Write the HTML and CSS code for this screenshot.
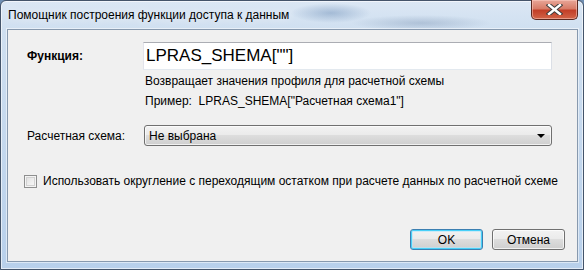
FILE: index.html
```html
<!DOCTYPE html>
<html lang="ru">
<head>
    <meta charset="UTF-8">
    <title>Помощник построения функции доступа к данным</title>
    <link rel="stylesheet" href="styles.css">
</head>
<body>
    <div class="window">
        <div class="titlebar">
            <span class="title">Помощник построения функции доступа к данным</span>
            <button class="close-btn" title="Закрыть">
                <svg width="17" height="11" viewBox="0 0 17 11">
                    <path d="M3 1 L14 10 M14 1 L3 10" stroke="#3d3d3d" stroke-width="4.4" stroke-linecap="square" fill="none"/>
                    <path d="M3 1 L14 10 M14 1 L3 10" stroke="#ffffff" stroke-width="2.4" stroke-linecap="square" fill="none"/>
                </svg>
            </button>
        </div>

        <div class="client">
            <div class="field-row func-row">
                <label class="field-label bold">Функция:</label>
                <input class="func-input" type="text" value='LPRAS_SHEMA[""]'>
            </div>
            <div class="hint">Возвращает значения профиля для расчетной схемы</div>
            <div class="hint example">Пример:&nbsp; LPRAS_SHEMA["Расчетная схема1"]</div>

            <div class="field-row scheme-row">
                <label class="field-label">Расчетная схема:</label>
                <div class="combo">
                    <span>Не выбрана</span>
                    <span class="combo-arrow"></span>
                </div>
            </div>

            <label class="check-row">
                <span class="checkbox"></span>
                Использовать округление с переходящим остатком при расчете данных по расчетной схеме
            </label>

            <div class="buttons">
                <button class="btn btn-default">OK</button>
                <button class="btn">Отмена</button>
            </div>
        </div>
    </div>
</body>
</html>
```

FILE: styles.css
```css
* {
    margin: 0;
    padding: 0;
    box-sizing: border-box;
}

body {
    width: 584px;
    height: 270px;
    overflow: hidden;
    font-family: "Liberation Sans", Arial, sans-serif;
    font-size: 12px;
    color: #000;
    background: #6f8fb3;
}

/* Aero window frame */
.window {
    width: 584px;
    height: 270px;
    display: flex;
    flex-direction: column;
    border: 1px solid #44546a;
    border-radius: 6px 6px 0 0;
    background:
        radial-gradient(ellipse 40px 10px at 330px 12px, rgba(70, 110, 160, 0.35), transparent),
        radial-gradient(ellipse 70px 8px at 420px 22px, rgba(70, 100, 140, 0.25), transparent),
        linear-gradient(180deg, #dbe7f4 0%, #cfdff0 30px, #b8d0eb 100%);
    box-shadow: inset 0 0 0 1px rgba(255, 255, 255, 0.6);
}

.titlebar {
    height: 28px;
    display: flex;
    align-items: flex-start;
    justify-content: space-between;
    padding-left: 7px;
}

.title {
    margin-top: 7px;
    font-size: 12px;
    color: #000;
    text-shadow: 0 0 8px rgba(255, 255, 255, 0.9);
}

.close-btn {
    width: 47px;
    height: 20px;
    margin-top: -1px;
    margin-right: 5px;
    display: flex;
    align-items: center;
    justify-content: center;
    border: 1px solid #5a2820;
    border-top: none;
    border-radius: 0 0 5px 5px;
    background: linear-gradient(180deg, #e8a698 0%, #d87c68 45%, #c23f28 55%, #d26448 100%);
    box-shadow: inset 0 0 0 1px rgba(255, 210, 200, 0.5);
}

/* client area */
.client {
    flex: 1;
    margin: 0 5px 7px 6px;
    display: flex;
    flex-direction: column;
    background: #f0f0f0;
    border: 1px solid #8799ae;
    box-shadow: 0 0 0 1px rgba(255, 255, 255, 0.5);
}

.field-row {
    display: flex;
    align-items: center;
    padding-left: 19px;
}

.field-label {
    width: 116px;
    flex-shrink: 0;
}

.bold {
    font-weight: 700;
}

.func-row {
    margin-top: 12px;
}

.func-input {
    width: 409px;
    height: 28px;
    padding: 0 2px;
    border: 1px solid #e3e9ef;
    border-top-color: #abadb3;
    border-left-color: #e2e3ea;
    border-right-color: #dbdfe6;
    background: #fff;
    font-family: "Liberation Sans", Arial, sans-serif;
    font-size: 17px;
    color: #000;
    outline: none;
}

.hint {
    padding-left: 137px;
    line-height: 16px;
    margin-top: 3px;
}

.hint.example {
    margin-top: 4px;
}

.scheme-row {
    margin-top: 16px;
}

.scheme-row .field-label {
    width: 117px;
}

.combo {
    width: 408px;
    height: 21px;
    display: flex;
    align-items: center;
    justify-content: space-between;
    padding: 0 6px 0 4px;
    border: 1px solid #707070;
    border-radius: 3px;
    background: linear-gradient(180deg, #f2f2f2 0%, #ebebeb 45%, #dddddd 50%, #cfcfcf 100%);
    box-shadow: inset 0 0 0 1px rgba(255, 255, 255, 0.7);
}

.combo-arrow {
    width: 0;
    height: 0;
    border-left: 4px solid transparent;
    border-right: 4px solid transparent;
    border-top: 4px solid #000;
}

.check-row {
    display: flex;
    align-items: center;
    margin-top: 27px;
    padding-left: 16px;
    line-height: 16px;
}

.checkbox {
    width: 13px;
    height: 13px;
    margin-right: 6px;
    flex-shrink: 0;
    border: 1px solid #8e8f8f;
    background: linear-gradient(135deg, #dcdcdc 0%, #f0f0f0 60%, #fbfbfb 100%);
    box-shadow: inset 0 0 0 1px #f4f4f4, inset 0 0 0 2px #d2d2d2;
}

.buttons {
    display: flex;
    justify-content: flex-end;
    gap: 9px;
    margin-top: auto;
    padding: 0 12px 11px 0;
}

.btn {
    width: 73px;
    height: 21px;
    border: 1px solid #707070;
    border-radius: 3px;
    background: linear-gradient(180deg, #f2f2f2 0%, #ebebeb 45%, #dddddd 50%, #cfcfcf 100%);
    box-shadow: inset 0 0 0 1px rgba(255, 255, 255, 0.7);
    font-family: "Liberation Sans", Arial, sans-serif;
    font-size: 12px;
    color: #000;
}

.btn-default {
    border-color: #3c7fb1;
    box-shadow: inset 0 0 0 1px #48d0f8, inset 0 0 0 2px rgba(180, 230, 250, 0.6);
}
```
